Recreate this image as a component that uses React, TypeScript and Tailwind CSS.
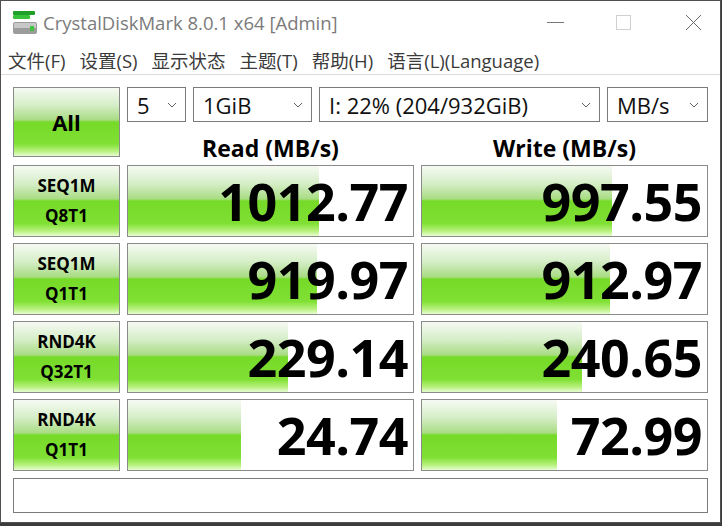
import { FC } from 'react';

// ─── Data ─────────────────────────────────────────────────────
type Row = { l1: string; l2: string; read: string; write: string; rw: number; ww: number };

const ROWS: Row[] = [
  { l1: 'SEQ1M', l2: 'Q8T1', read: '1012.77', write: '997.55', rw: 191, ww: 190 },
  { l1: 'SEQ1M', l2: 'Q1T1', read: '919.97', write: '912.97', rw: 189, ww: 188 },
  { l1: 'RND4K', l2: 'Q32T1', read: '229.14', write: '240.65', rw: 160, ww: 160 },
  { l1: 'RND4K', l2: 'Q1T1', read: '24.74', write: '72.99', rw: 113, ww: 135 },
];

const GREEN =
  'bg-[linear-gradient(to_bottom,#f6faf3_0%,#d6eec8_25%,#a9dc84_47%,#76da28_50%,#80e034_82%,#b9f27f_93%,#e6fcd2_100%)]';

const FONT = { fontFamily: '"Open Sans", "Noto Sans", "Noto Sans CJK SC", sans-serif' };

// ─── Sub-components ───────────────────────────────────────────

const Chevron: FC = () => (
  <svg width="10" height="6" viewBox="0 0 10 6" className="shrink-0">
    <path d="M1 1 L5 5 L9 1" fill="none" stroke="#606060" strokeWidth="1" />
  </svg>
);

const Combo: FC<{ text: string; w: string }> = ({ text, w }) => (
  <div className={`${w} h-[35px] border border-[#7a7a7a] bg-white flex items-center justify-between pl-[9px] pr-[8px]`}>
    <span className="text-[22px] text-[#111] leading-none">{text}</span>
    <Chevron />
  </div>
);

const ResultBox: FC<{ value: string; width: number }> = ({ value, width }) => (
  <div className="relative w-[287px] h-[72px] border border-[#8a8a8a] bg-white overflow-hidden">
    <div className={`absolute left-0 top-0 bottom-0 ${GREEN}`} style={{ width }} />
    <div className="relative h-full flex items-center justify-end pr-[5px]">
      <span className="text-[52px] font-bold text-black leading-none tracking-[-0.5px]">{value}</span>
    </div>
  </div>
);

const AppIcon: FC = () => (
  <svg width="26" height="26" viewBox="0 0 26 26">
    <rect x="1" y="1" width="22" height="4" rx="1" fill="#1fa02a" />
    <rect x="1" y="5" width="17" height="4" rx="1" fill="#36c23a" />
    <rect x="1" y="12" width="24" height="12" rx="2" fill="#9c9c9c" />
    <rect x="2" y="13" width="22" height="5" rx="1" fill="#c8c8c8" />
    <rect x="18" y="16" width="4" height="5" fill="#3fc43f" />
  </svg>
);

// ─── Main Component ───────────────────────────────────────────

export default function App() {
  return (
    <div className="w-[722px] h-[526px] bg-[#3c3c3c] overflow-hidden" style={FONT}>
      <div className="w-[721px] h-[523px] bg-white border border-[#505050] flex flex-col">
        {/* ── Title bar ── */}
        <div className="h-[43px] flex items-center shrink-0">
          <div className="ml-[11px] mt-[1px]">
            <AppIcon />
          </div>
          <span className="ml-[5px] text-[18.5px] text-[#7b7b7b]">CrystalDiskMark 8.0.1 x64 [Admin]</span>
          <div className="ml-auto flex items-center h-full">
            <div className="w-[46px] h-full flex items-center justify-center mr-[22px]">
              <div className="w-[17px] h-px bg-[#777]" />
            </div>
            <div className="w-[46px] h-full flex items-center justify-center mr-[24px]">
              <div className="w-[15px] h-[15px] border border-[#d0d0d0]" />
            </div>
            <div className="w-[46px] h-full flex items-center justify-center mr-[4px]">
              <svg width="17" height="17" viewBox="0 0 17 17">
                <path d="M1 1 L16 16 M16 1 L1 16" stroke="#6a6a6a" strokeWidth="1" />
              </svg>
            </div>
          </div>
        </div>

        {/* ── Menu bar ── */}
        <div className="h-[31px] flex items-center gap-[14px] pl-[7px] pt-[3px] text-[18.5px] text-[#3a3a3a] border-b border-[#dcdcdc] shrink-0">
          <span>文件(F)</span>
          <span>设置(S)</span>
          <span>显示状态</span>
          <span>主题(T)</span>
          <span>帮助(H)</span>
          <span>语言(L)(Language)</span>
        </div>

        {/* ── Toolbar ── */}
        <div className="pl-[12px] pt-[12px] flex gap-[7px]">
          <div className={`w-[107px] h-[70px] border border-[#8a8a8a] ${GREEN} flex items-center justify-center`}>
            <span className="text-[22px] font-bold text-black">All</span>
          </div>
          <div className="flex flex-col">
            <div className="flex gap-[7px]">
              <Combo text="5" w="w-[59px]" />
              <Combo text="1GiB" w="w-[119px]" />
              <Combo text="I: 22% (204/932GiB)" w="w-[281px]" />
              <Combo text="MB/s" w="w-[101px]" />
            </div>
            <div className="h-[43px] flex">
              <div className="w-[287px] flex items-center justify-center pt-[10px] text-[23px] font-bold text-black">
                Read (MB/s)
              </div>
              <div className="w-[287px] ml-[7px] flex items-center justify-center pt-[10px] text-[23px] font-bold text-black">
                Write (MB/s)
              </div>
            </div>
          </div>
        </div>

        {/* ── Results ── */}
        <div className="pl-[12px] flex flex-col gap-[6px]">
          {ROWS.map((r) => (
            <div key={r.l1 + r.l2} className="flex gap-[7px]">
              <div
                className={`w-[107px] h-[72px] border border-[#8a8a8a] ${GREEN} flex flex-col items-center justify-center text-[17px] font-bold text-black leading-[30px]`}
              >
                <span>{r.l1}</span>
                <span>{r.l2}</span>
              </div>
              <ResultBox value={r.read} width={r.rw} />
              <ResultBox value={r.write} width={r.ww} />
            </div>
          ))}
        </div>

        {/* ── Comment ── */}
        <div className="ml-[12px] mt-[7px] w-[695px] h-[35px] border border-[#7a7a7a] bg-white" />
      </div>
    </div>
  );
}
